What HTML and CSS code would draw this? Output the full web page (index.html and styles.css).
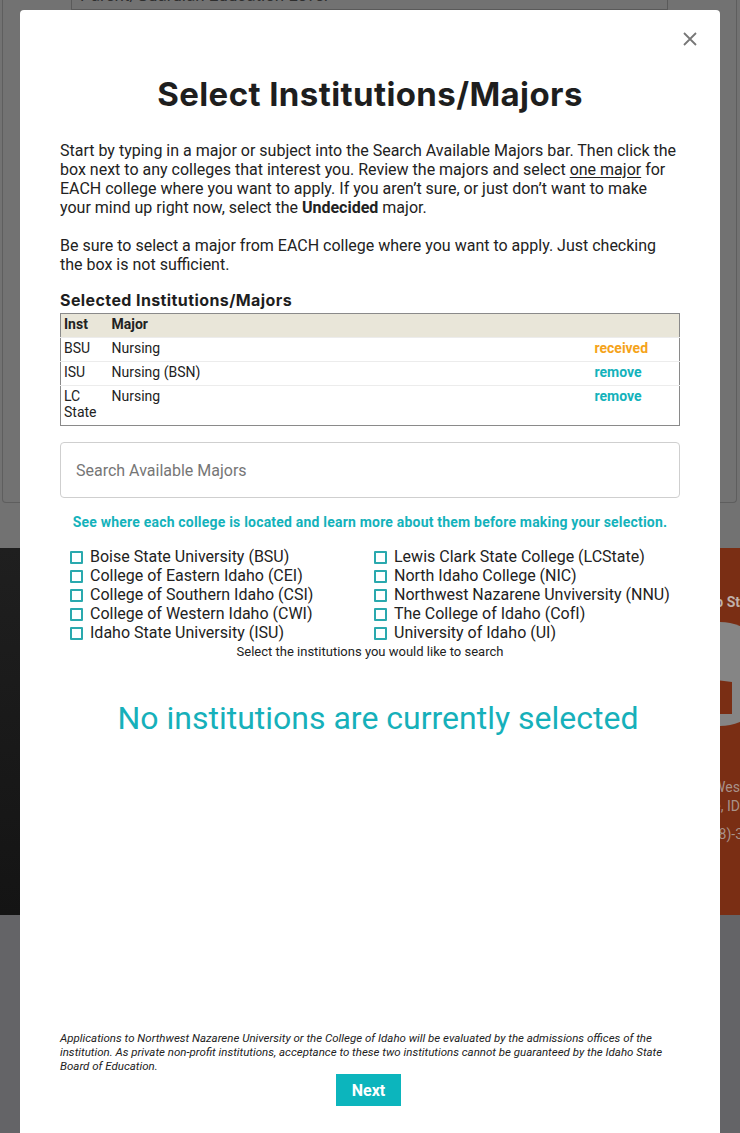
FILE: index.html
```html
<!DOCTYPE html>
<html lang="en">
<head>
<meta charset="utf-8">
<title>Select Institutions/Majors</title>
<link rel="stylesheet" href="styles.css">
</head>
<body>
<div class="page">
  <div class="page-top">
    <div class="card">
      <div class="card-field">Parent/Guardian Education Level</div>
    </div>
  </div>
  <footer class="site-footer">
    <div class="footer-dark"></div>
    <div class="footer-brand">
      <div class="footer-title">Idaho State Board</div>
      <svg class="footer-map" width="120" height="104" viewBox="0 0 120 104">
        <circle cx="84" cy="52" r="52" fill="#858585"/>
        <path d="M34 8 L44 8 L44 24 L50 30 L46 42 L54 40 L62 56 L80 58 L96 60 L96 92 L34 92 L34 62 L40 50 L36 38 Z" fill="#7a2e14"/>
      </svg>
      <div class="footer-addr">650 West<br>Boise, ID</div>
      <div class="footer-phone">(208)-334</div>
    </div>
  </footer>
  <div class="page-bottom"></div>
</div>

<div class="modal" role="dialog" aria-labelledby="modal-title">
  <button class="close" type="button" aria-label="Close">
    <svg width="14" height="14" viewBox="0 0 14 14"><path d="M1 1L13 13M13 1L1 13" stroke="#777" stroke-width="1.8" fill="none"/></svg>
  </button>
  <h1 class="modal-title" id="modal-title">Select Institutions/Majors</h1>
  <div class="intro">
    <p>Start by typing in a major or subject into the Search Available Majors bar. Then click the box next to any colleges that interest you. Review the majors and select <u>one major</u> for EACH college where you want to apply. If you aren’t sure, or just don’t want to make your mind up right now, select the <strong>Undecided</strong> major.</p>
    <p>Be sure to select a major from EACH college where you want to apply. Just checking the box is not sufficient.</p>
  </div>
  <h2 class="section-title">Selected Institutions/Majors</h2>
  <table class="selected">
    <thead>
      <tr><th class="c-inst">Inst</th><th>Major</th><th class="c-act"></th></tr>
    </thead>
    <tbody>
      <tr><td>BSU</td><td>Nursing</td><td class="status received">received</td></tr>
      <tr><td>ISU</td><td>Nursing (BSN)</td><td class="status remove">remove</td></tr>
      <tr><td>LC State</td><td>Nursing</td><td class="status remove">remove</td></tr>
    </tbody>
  </table>
  <div class="search">
    <input type="text" class="search-input" placeholder="Search Available Majors">
  </div>
  <a class="map-link" href="#">See where each college is located and learn more about them before making your selection.</a>
  <div class="inst-grid">
    <div class="inst-col">
      <label class="inst"><input type="checkbox"><span>Boise State University (BSU)</span></label>
      <label class="inst"><input type="checkbox"><span>College of Eastern Idaho (CEI)</span></label>
      <label class="inst"><input type="checkbox"><span>College of Southern Idaho (CSI)</span></label>
      <label class="inst"><input type="checkbox"><span>College of Western Idaho (CWI)</span></label>
      <label class="inst"><input type="checkbox"><span>Idaho State University (ISU)</span></label>
    </div>
    <div class="inst-col">
      <label class="inst"><input type="checkbox"><span>Lewis Clark State College (LCState)</span></label>
      <label class="inst"><input type="checkbox"><span>North Idaho College (NIC)</span></label>
      <label class="inst"><input type="checkbox"><span>Northwest Nazarene Unviversity (NNU)</span></label>
      <label class="inst"><input type="checkbox"><span>The College of Idaho (CofI)</span></label>
      <label class="inst"><input type="checkbox"><span>University of Idaho (UI)</span></label>
    </div>
  </div>
  <div class="inst-hint">Select the institutions you would like to search</div>
  <div class="results">
    <p class="empty">No institutions are currently selected</p>
  </div>
  <p class="disclaimer">Applications to Northwest Nazarene University or the College of Idaho will be evaluated by the admissions offices of the institution. As private non-profit institutions, acceptance to these two institutions cannot be guaranteed by the Idaho State Board of Education.</p>
  <div class="actions"><button class="next" type="button">Next</button></div>
</div>
</body>
</html>
```

FILE: styles.css
```css
* { box-sizing: border-box; }
html, body { margin: 0; padding: 0; }
body {
  width: 740px;
  height: 1133px;
  overflow: hidden;
  background: #707070;
  font-family: Roboto, "Liberation Sans", sans-serif;
  color: #222;
}

/* page behind the overlay (already dimmed colours) */
.page { display: flex; flex-direction: column; height: 1133px; }
.page-top { height: 548px; background: #727272; padding: 0 3px 0 2px; flex: none; }
.card {
  height: 503px;
  border: 1px solid #5e5e5e;
  border-top: 0;
  border-radius: 0 0 4px 4px;
  overflow: hidden;
}
.card-field {
  margin: -15px 68px 0 68px;
  height: 25px;
  border: 1px solid #5a5a5a;
  border-top: 0;
  padding: 0 8px;
  font-size: 17px;
  line-height: 20px;
  color: #2e2e2e;
}
.site-footer { height: 367px; display: flex; flex: none; }
.footer-dark { flex: 1; background: linear-gradient(#1f1f1f, #141414); }
.footer-brand {
  width: 140px;
  flex: none;
  background: #7a2e14;
  padding: 46px 0 0 88px;
  color: #b09e96;
  overflow: hidden;
  white-space: nowrap;
}
.footer-title { font-weight: 700; font-size: 14px; color: #bfb0a9; }
.footer-map { display: block; margin: 12px 0 0 -52px; }
.footer-addr { margin: 52px 0 0 -2px; font-size: 14px; line-height: 19px; color: #a99289; }
.footer-phone { margin: 9px 0 0 10px; font-size: 14px; line-height: 19px; color: #a99289; }
.page-bottom { flex: 1; background: #646467; }

/* modal */
.modal {
  position: absolute;
  top: 10px;
  left: 20px;
  width: 700px;
  height: 1140px;
  background: #fff;
  border-radius: 4px 4px 0 0;
  padding: 0 40px;
  display: flex;
  flex-direction: column;
}
.close {
  position: absolute;
  top: 22px;
  right: 23px;
  width: 14px;
  height: 14px;
  padding: 0;
  border: 0;
  background: none;
  display: flex;
}
.modal-title {
  margin: 64px 0 0;
  font-family: Inter, "Noto Sans", sans-serif;
  font-weight: 700;
  font-size: 33px;
  line-height: 40px;
  text-align: center;
  color: #1e1e1e;
  letter-spacing: 0.4px;
}
.intro { margin-top: 27px; font-size: 16px; line-height: 19px; }
.intro p { margin: 0 0 19px; }
.intro p:last-child { margin: 0; }
.intro u { text-underline-offset: 2px; }

.section-title {
  margin: 17px 0 3px;
  font-family: Inter, "Noto Sans", sans-serif;
  font-weight: 700;
  font-size: 16px;
  line-height: 19px;
  letter-spacing: 0.4px;
  color: #1e1e1e;
}
.selected {
  width: 100%;
  border-collapse: collapse;
  border: 1px solid #8a8a8a;
  font-size: 14px;
  line-height: 16px;
}
.selected th, .selected td {
  text-align: left;
  vertical-align: top;
  padding: 2px 3px 5px;
}
.selected thead th { background: #e9e6d9; font-weight: 700; }
.selected tbody tr { border-top: 1px solid #ececec; }
.c-inst { width: 48px; }
.c-act { width: 88px; }
.status { font-weight: 700; }
.received { color: #f5a31a; }
.remove { color: #14b2bb; }

.search { margin-top: 16px; }
.search-input {
  display: block;
  width: 100%;
  height: 56px;
  border: 1px solid #cfcfcf;
  border-radius: 4px;
  padding: 0 15px;
  font-family: Roboto, "Liberation Sans", sans-serif;
  font-size: 16px;
  color: #222;
}
.search-input::placeholder { color: #767676; }

.map-link {
  display: block;
  margin-top: 16px;
  text-align: center;
  font-size: 14px;
  line-height: 17px;
  font-weight: 700;
  letter-spacing: 0.2px;
  color: #14b2bb;
  text-decoration: none;
}
.inst-grid {
  margin: 16px 0 0 10px;
  display: grid;
  grid-template-columns: 304px 1fr;
}
.inst-col { display: flex; flex-direction: column; }
.inst {
  display: flex;
  align-items: center;
  gap: 7px;
  font-size: 16px;
  line-height: 19px;
  color: #222;
}
.inst input {
  appearance: none;
  -webkit-appearance: none;
  margin: 1px 0 0;
  width: 13px;
  height: 13px;
  border: 2px solid #2aa9ae;
  border-radius: 1px;
  background: #fff;
  flex: none;
}
.inst-hint {
  text-align: center;
  font-size: 13px;
  line-height: 19px;
  color: #222;
}
.results { margin-top: 38px; flex: 1; }
.empty {
  margin: 0;
  padding-left: 16px;
  text-align: center;
  font-size: 32px;
  line-height: 38px;
  color: #16b0ba;
}
.disclaimer {
  margin: 0;
  font-size: 11.5px;
  line-height: 14px;
  font-style: italic;
  color: #222;
}
.actions { display: flex; justify-content: center; margin: 1px 0 44px; }
.next {
  width: 65px;
  height: 32px;
  border: 0;
  margin-left: -3px;
  background: #0cb5bd;
  color: #fff;
  font-family: Roboto, "Liberation Sans", sans-serif;
  font-weight: 700;
  font-size: 16px;
}
```
